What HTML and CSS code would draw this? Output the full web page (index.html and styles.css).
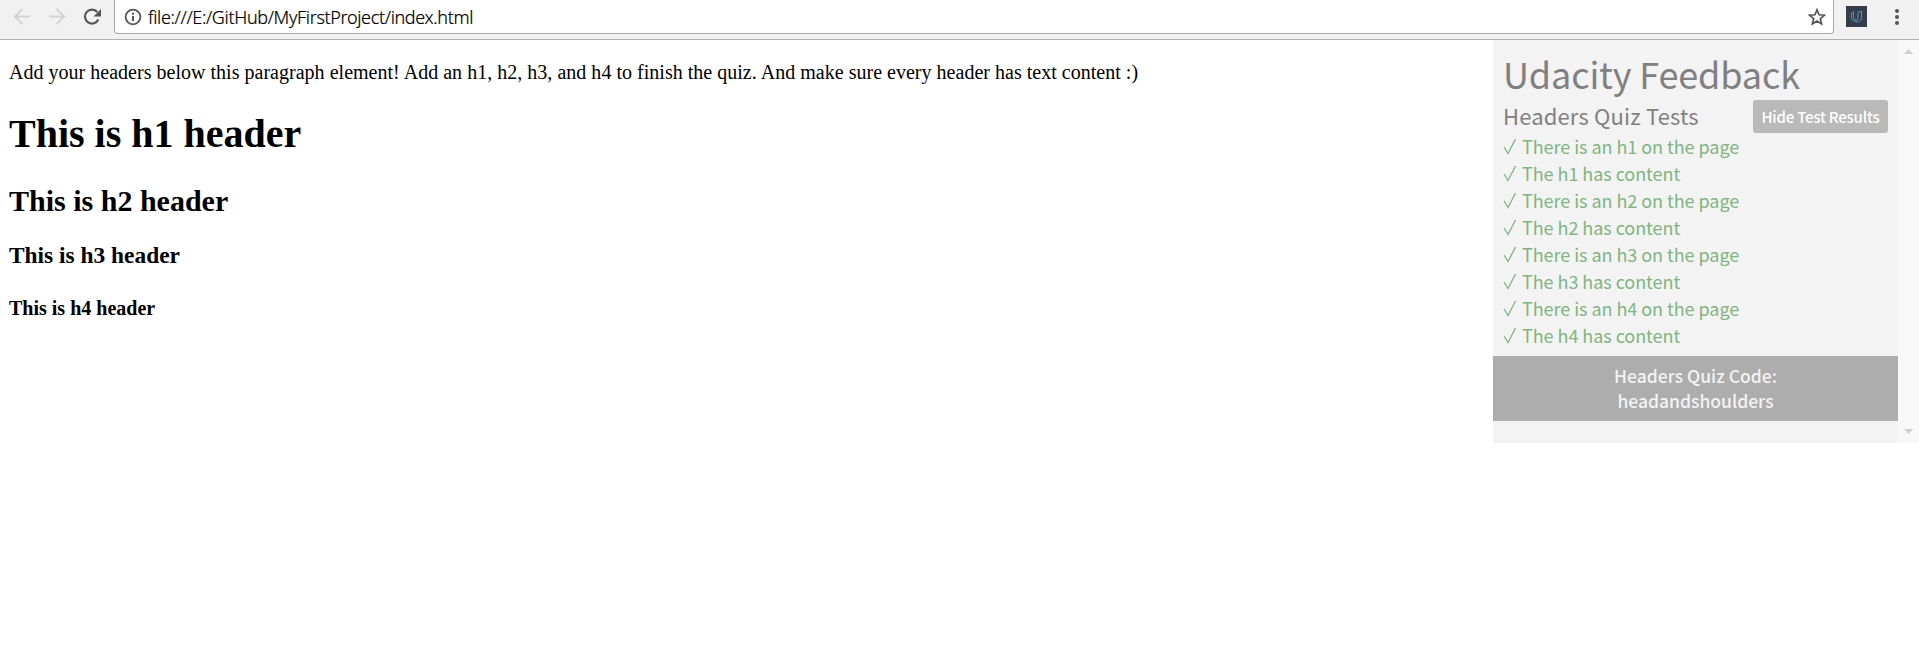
FILE: index.html
```html
<!DOCTYPE html>
<html lang="en">
<head>
<meta charset="utf-8">
<title>Headers Quiz</title>
<link rel="stylesheet" href="styles.css">
</head>
<body>
<header class="toolbar">
  <svg class="nav" width="114" height="39" viewBox="0 0 114 39" fill="none">
    <g stroke="#d3d3d3" stroke-width="2"><path d="M30 16.500H15M22.500 9l-7.500 7.500 7.500 7.500M49 16.500h15M56.500 9l7.500 7.500-7.500 7.500"/></g>
    <path d="M97.300 12A7 7 0 1 0 98.300 19.500" stroke="#555" stroke-width="2.200"/><path d="M101 9v7.500h-7.500z" fill="#555"/>
  </svg>
  <div class="address">
    <svg width="18" height="18" viewBox="0 0 18 18"><circle cx="9" cy="9" r="7.400" fill="none" stroke="#555" stroke-width="1.800"/><path d="M8 8h2v5H8zM8 4.800h2v2H8z" fill="#555"/></svg>
    <span class="url">file:///E:/GitHub/MyFirstProject/index.html</span>
    <svg class="star" width="18" height="18" viewBox="0 0 18 18"><path d="M9 1.800l2 5 5.400.4-4.100 3.500 1.300 5.300L9 13.100 4.400 16l1.300-5.300L1.600 7.200 7 6.800z" fill="none" stroke="#555" stroke-width="1.700"/></svg>
  </div>
  <svg class="extension" width="21" height="21" viewBox="0 0 21 21"><path d="M0 0h21v21H0z" fill="#343d49"/><g fill="none" stroke="#4a9cc8" stroke-width="1"><path d="M7.500 5.500L5.500 7v4.500c0 5 6.500 4.500 6.500 0V6.500l3.500-1.300v6c0 5.500-5.500 5.500-6.500 3.500M7.500 5.500v5.800c0 2 1.500 2.500 2.500 1.700"/></g></svg>
  <svg class="dots" width="6" height="18" viewBox="0 0 6 18" fill="#555"><circle cx="3" cy="3" r="2"/><circle cx="3" cy="9" r="2"/><circle cx="3" cy="15" r="2"/></svg>
</header>
<div class="page">
  <main class="content">
    <p>Add your headers below this paragraph element! Add an h1, h2, h3, and h4 to finish the quiz. And make sure every header has text content :)</p>
    <h1>This is h1 header</h1>
    <h2>This is h2 header</h2>
    <h3>This is h3 header</h3>
    <h4>This is h4 header</h4>
  </main>
  <aside class="feedback">
    <div class="panel">
      <div class="title">Udacity Feedback</div>
      <div class="quiz"><span class="quiz-name">Headers Quiz Tests</span><button class="hide">Hide Test Results</button></div>
      <ul class="tests">
        <li><svg class="check" viewBox="0 0 13 17"><path d="M1 9l4 6.500L12.500 1"/></svg>There is an h1 on the page</li>
        <li><svg class="check" viewBox="0 0 13 17"><path d="M1 9l4 6.500L12.500 1"/></svg>The h1 has content</li>
        <li><svg class="check" viewBox="0 0 13 17"><path d="M1 9l4 6.500L12.500 1"/></svg>There is an h2 on the page</li>
        <li><svg class="check" viewBox="0 0 13 17"><path d="M1 9l4 6.500L12.500 1"/></svg>The h2 has content</li>
        <li><svg class="check" viewBox="0 0 13 17"><path d="M1 9l4 6.500L12.500 1"/></svg>There is an h3 on the page</li>
        <li><svg class="check" viewBox="0 0 13 17"><path d="M1 9l4 6.500L12.500 1"/></svg>The h3 has content</li>
        <li><svg class="check" viewBox="0 0 13 17"><path d="M1 9l4 6.500L12.500 1"/></svg>There is an h4 on the page</li>
        <li><svg class="check" viewBox="0 0 13 17"><path d="M1 9l4 6.500L12.500 1"/></svg>The h4 has content</li>
      </ul>
      <div class="code">Headers Quiz Code:<br>headandshoulders</div>
    </div>
    <div class="scrollbar">
      <svg width="9" height="5" viewBox="0 0 9 5"><path d="M0 5L4.500 0 9 5z"/></svg>
      <svg width="9" height="5" viewBox="0 0 9 5"><path d="M0 0h9L4.500 5z"/></svg>
    </div>
  </aside>
</div>
</body>
</html>
```
FILE: styles.css
```css
* { box-sizing: border-box; }
body { margin: 0; background: #fff; color: #000; overflow: hidden; font-family: "Liberation Serif", "Times New Roman", serif; }
.toolbar { display: flex; align-items: flex-start; height: 40px; background: #f1f1f1; border-bottom: 1px solid #b0b0b0; }
.nav { flex: none; }
.address { display: flex; align-items: center; width: 1720px; height: 34px; padding: 0 7px 0 9px; border: 1px solid #a8a8a8; border-top: 0; border-radius: 0 0 4px 4px; background: #fff; }
.url { margin-left: 6px; font: 300 18px/24px "Noto Sans", sans-serif; letter-spacing: -0.34px; -webkit-text-stroke: 0.2px #000; }
.star { margin-left: auto; }
.extension { margin: 6px 0 0 12px; }
.dots { margin: 8px 0 0 27px; }
.page { display: flex; justify-content: space-between; align-items: flex-start; }
.content { padding: 20px 9px; font-size: 20px; }
p { margin: 0; line-height: 24px; letter-spacing: 0.02px; }
h1, h2, h3, h4 { margin: 0; }
h1 { margin-top: 27px; font-size: 40px; line-height: 46px; }
h2 { margin-top: 27px; font-size: 30px; line-height: 34px; }
h3 { margin-top: 24px; font-size: 23.4px; line-height: 27px; }
h4 { margin-top: 28px; font-size: 20px; line-height: 23px; }
.feedback { display: flex; width: 426px; height: 403px; font-family: "Noto Sans CJK SC", sans-serif; }
.panel { width: 405px; background: #f3f3f3; color: #808080; }
.title { height: 60px; padding: 9px 10px 0; font-size: 36px; line-height: 48px; letter-spacing: -0.12px; white-space: nowrap; }
.quiz { display: flex; justify-content: space-between; align-items: flex-start; height: 33px; padding: 0 10px; }
.quiz-name { font-size: 22px; line-height: 31px; letter-spacing: 0.16px; }
.hide { width: 135px; height: 33px; padding: 0; border: 0; border-radius: 3px; background: #b9b9b9; color: #fff; font: 500 15px/31px "Noto Sans CJK SC", sans-serif; letter-spacing: -0.2px; white-space: nowrap; }
.tests { margin: 0; padding: 0 10px; list-style: none; height: 223px; color: #7fb57f; font-size: 18px; letter-spacing: -0.05px; }
.tests li { display: flex; align-items: center; height: 27px; line-height: 27px; }
.check { width: 13px; height: 17px; margin-right: 6px; fill: none; stroke: #7fb57f; stroke-width: 1.3; }
.code { height: 65px; padding-top: 7px; background: #adadad; color: #f3f3f3; text-align: center; font-size: 17.5px; font-weight: 500; line-height: 25px; }
.scrollbar { display: flex; flex-direction: column; justify-content: space-between; align-items: center; width: 21px; padding: 9px 0; background: #f8f8f8; fill: #cfcfcf; }
```
